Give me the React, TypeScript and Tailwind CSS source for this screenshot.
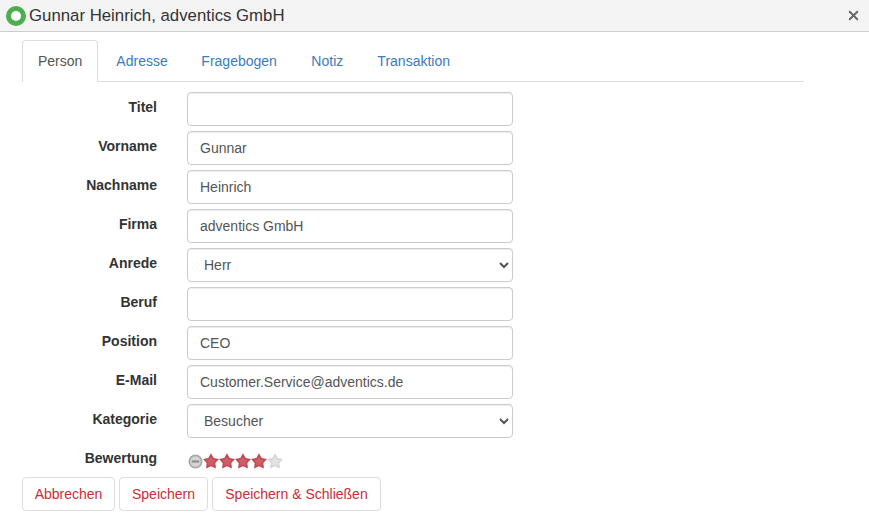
import { X } from 'lucide-react';

const inputClass =
  'h-[34px] w-[326px] rounded border border-[#ccc] bg-white px-3 text-[14px] text-[#555] shadow-[inset_0_1px_1px_rgba(0,0,0,0.075)] outline-none';

type Field = { label: string; value: string; options?: boolean };

const FIELDS: Field[] = [
  { label: 'Titel', value: '' },
  { label: 'Vorname', value: 'Gunnar' },
  { label: 'Nachname', value: 'Heinrich' },
  { label: 'Firma', value: 'adventics GmbH' },
  { label: 'Anrede', value: 'Herr', options: true },
  { label: 'Beruf', value: '' },
  { label: 'Position', value: 'CEO' },
  { label: 'E-Mail', value: 'Customer.Service@adventics.de' },
  { label: 'Kategorie', value: 'Besucher', options: true },
];

const TABS = [
  { name: 'Adresse', cls: 'ml-[3px] w-[83px]' },
  { name: 'Fragebogen', cls: 'ml-[2px] w-[108px]' },
  { name: 'Notiz', cls: 'ml-[2px] w-[64px]' },
  { name: 'Transaktion', cls: 'ml-[2px] w-[103px]' },
];

const STAR = 'M8 .3L10.7 4.980L15.990 6.100L12.370 10.120L12.940 15.500L8 13.300L3.060 15.500L3.630 10.120L.01 6.100L5.300 4.980Z';

function Star({ on }: { on: boolean }) {
  return (
    <svg width="16" height="16" viewBox="0 0 16 16">
      <path d={STAR} fill={on ? '#bf4d53' : '#d6d6d6'} />
      <path
        d={STAR}
        transform="translate(8 8.700) scale(0.6) translate(-8 -8.700)"
        fill={on ? '#cc6066' : '#e2e2e2'}
      />
    </svg>
  );
}

function Row({ field }: { field: Field }) {
  return (
    <div className="flex">
      <label className="w-[135px] pt-[5px] text-right text-[14px] font-bold leading-[20px] text-[#333]">{field.label}</label>
      <div className="ml-[30px]">
        {field.options ? (
          <select defaultValue={field.value} className={inputClass + ' block'}>
            <option>{field.value}</option>
          </select>
        ) : (
          <input defaultValue={field.value} className={inputClass + ' block'} />
        )}
      </div>
    </div>
  );
}

export default function App() {
  return (
    <div className="h-[531px] w-[869px] overflow-hidden bg-white font-['Liberation_Sans',Arial,sans-serif] text-[14px] text-[#333]">
      <div className="flex h-[32px] items-center border-b border-[#ccc] bg-[#f4f4f4] pl-[6px] pr-[8px]">
        <span className="mt-[1px] h-[20px] w-[20px] rounded-full border-[5px] border-[#4cae4f] bg-white" />
        <span className="ml-[3px] text-[16.8px] leading-[20px] text-[#333]">Gunnar Heinrich, adventics GmbH</span>
        <X size={15} strokeWidth={3.2} className="mb-[1px] ml-auto text-[#666]" />
      </div>

      <div className="ml-[22px] mt-[8px] flex h-[42px] w-[782px] border-b border-[#ddd]">
        <div className="h-[42px] rounded-t border border-b-0 border-[#ddd] bg-white px-[15px] pt-[10px] leading-[20px] text-[#555]">Person</div>
        {TABS.map((t) => (
          <div key={t.name} className={t.cls + ' h-[41px] whitespace-nowrap pl-[15px] pt-[11px] leading-[20px] text-[#3a7cbd]'}>
            {t.name}
          </div>
        ))}
      </div>

      <div className="ml-[22px] mt-[10px] flex flex-col gap-[5px]">
        {FIELDS.map((f) => (
          <Row key={f.label} field={f} />
        ))}
      </div>

      <div className="ml-[22px] mt-[5px] flex h-[34px]">
        <label className="w-[135px] pt-[5px] text-right font-bold leading-[20px] text-[#333]">Bewertung</label>
        <div className="ml-[30px] flex items-start pl-[1px] pt-[10px]">
          <svg width="15" height="15" viewBox="0 0 15 15" className="mt-[1px]">
            <circle cx="7.500" cy="7.500" r="7" fill="#a8a8a8" />
            <circle cx="7.500" cy="7.500" r="5.300" fill="#d4d4d4" />
            <rect x="3.800" y="6.500" width="7.400" height="2" fill="#8a8a8a" />
          </svg>
          {[true, true, true, true, false].map((on, i) => (
            <Star key={i} on={on} />
          ))}
        </div>
      </div>

      <div className="ml-[22px] flex gap-[4px]">
        {[
          { name: 'Abbrechen', w: 'w-[93px]' },
          { name: 'Speichern', w: 'w-[89px]' },
          { name: 'Speichern & Schließen', w: 'w-[169px]' },
        ].map((b) => (
          <button key={b.name} className={b.w + ' h-[34px] rounded border border-[#ddd] bg-white text-[14px] text-[#cc2b38]'}>
            {b.name}
          </button>
        ))}
      </div>
    </div>
  );
}
